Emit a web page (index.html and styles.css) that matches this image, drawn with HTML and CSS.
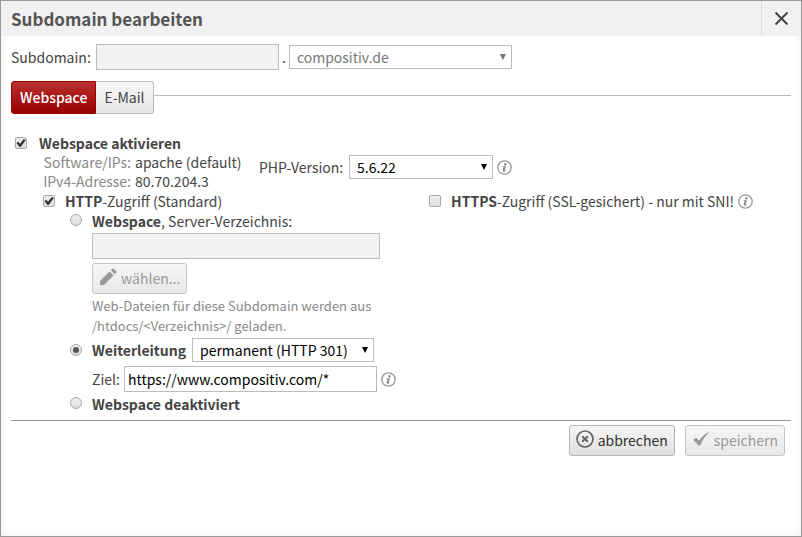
FILE: index.html
```html
<!DOCTYPE html>
<html lang="de">
<head>
<meta charset="utf-8">
<title>Subdomain bearbeiten</title>
<link rel="stylesheet" href="styles.css">
</head>
<body>
<svg class="sprite" aria-hidden="true">
  <symbol id="info" viewBox="0 0 15 15">
    <circle cx="7.5" cy="7.5" r="6.7" fill="none" stroke="#999" stroke-width="1.3"/>
    <circle cx="8.3" cy="4.2" r="1.2" fill="#888"/>
    <path d="M5.500 6.200h3.400l-1.100 4.300q-.1.500 1.100-.1v.6q-1.300.9-2.500.7-1-.2-.7-1.200l.9-3.600H5.400z" fill="#888"/>
  </symbol>
</svg>
<main class="dialog">
  <header class="titlebar">
    <h1 class="title">Subdomain bearbeiten</h1>
    <button class="close" type="button" aria-label="Schließen">
      <svg width="15" height="15" viewBox="0 0 15 15"><path d="M1.5 1.5l12 12m0-12l-12 12" stroke="#443f40" stroke-width="1.9" fill="none"/></svg>
    </button>
  </header>
  <form class="content">
    <div class="domain">
      <label class="domain-label" for="subdomain">Subdomain:</label>
      <input class="field field-name" id="subdomain" type="text" disabled>
      <span>.</span>
      <span class="select select-domain"><select aria-label="Domain" disabled><option>compositiv.de</option></select></span>
    </div>

    <nav class="tabs">
      <button class="tab tab-active" type="button">Webspace</button>
      <button class="tab" type="button">E-Mail</button>
    </nav>

    <section class="webspace">
      <div class="option">
        <input class="tick" id="active" type="checkbox" checked>
        <label for="active"><b>Webspace aktivieren</b></label>
      </div>
      <div class="server">
        <dl class="facts">
          <dt>Software/IPs:</dt><dd>apache (default)</dd>
          <dt>IPv4-Adresse:</dt><dd>80.70.204.3</dd>
        </dl>
        <div class="line php">
          <label class="php-label" for="php">PHP-Version:</label>
          <span class="select select-php"><select id="php"><option>5.6.22</option></select></span>
          <svg class="info"><use href="#info"/></svg>
        </div>
      </div>

      <div class="access">
        <div>
          <div class="option">
            <input class="tick" id="http" type="checkbox" checked>
            <label for="http"><b>HTTP</b>-Zugriff (Standard)</label>
          </div>
          <div class="modes">
            <div class="option">
              <input class="tick tick-round" id="folder" name="mode" type="radio">
              <label for="folder"><b>Webspace</b>, Server-Verzeichnis:</label>
            </div>
            <div class="details">
              <input class="field field-folder" type="text" aria-label="Server-Verzeichnis" disabled>
              <button class="button choose" type="button" disabled>
                <svg width="18" height="18" viewBox="0 0 18 18"><path d="M1 17v-4L10.600 3.400l4 4L5 17zM11.700 2.300l1.500-1.500q.8-.7 1.600 0l2.400 2.400q.8.800 0 1.600l-1.500 1.500z" fill="#999"/></svg>
                <span>wählen...</span>
              </button>
              <p class="hint">Web-Dateien für diese Subdomain werden aus /htdocs/&lt;Verzeichnis&gt;/ geladen.</p>
            </div>
            <div class="option option-select">
              <input class="tick tick-round" id="redirect" name="mode" type="radio" checked>
              <div class="line">
                <label class="redirect-label" for="redirect"><b>Weiterleitung</b></label>
                <span class="select select-redirect"><select aria-label="Art der Weiterleitung"><option>permanent (HTTP 301)</option></select></span>
              </div>
            </div>
            <div class="details target line">
              <label for="target">Ziel:</label>
              <input class="field field-target" id="target" type="text" value="https://www.compositiv.com/*">
              <svg class="info"><use href="#info"/></svg>
            </div>
            <div class="option">
              <input class="tick tick-round" id="off" name="mode" type="radio">
              <label for="off"><b>Webspace deaktiviert</b></label>
            </div>
          </div>
        </div>
        <div class="option">
          <input class="tick" id="https" type="checkbox">
          <div class="line">
            <label for="https"><b>HTTPS</b>-Zugriff (SSL-gesichert) - nur mit SNI!</label>
            <svg class="info"><use href="#info"/></svg>
          </div>
        </div>
      </div>
    </section>

    <footer class="actions">
      <button class="button" type="button">
        <svg width="18" height="18" viewBox="0 0 18 18"><circle cx="9" cy="9" r="8" fill="none" stroke="#666" stroke-width="1.700"/><path d="M6.200 6.200l5.600 5.600m0-5.600l-5.600 5.600" stroke="#666" stroke-width="2"/></svg>
        <span>abbrechen</span>
      </button>
      <button class="button" type="submit" disabled>
        <svg width="18" height="18" viewBox="0 0 18 18"><path d="M1 10l3-2.200 3.200 2.800Q11 4.500 17.500 1.500 11.500 7.500 8 15.500H6.500Q4 12 1 10z" fill="#999"/></svg>
        <span>speichern</span>
      </button>
    </footer>
  </form>
</main>
</body>
</html>
```
FILE: styles.css
```css
* {
  box-sizing: border-box;
}

body {
  margin: 0;
  background: #fff;
  color: #444;
  font-family: "Noto Sans CJK SC", "Open Sans", sans-serif;
  font-size: 14px;
  line-height: 20px;
}

button,
input,
select {
  font: inherit;
  color: inherit;
}

.sprite {
  display: none;
}

.dialog {
  min-height: 100vh;
  border: 1px solid #999;
  box-shadow: inset 0 0 8px #eee;
}

.titlebar {
  display: flex;
  align-items: stretch;
  justify-content: space-between;
  height: 35px;
  background: #f1f1f1;
}

.title {
  margin: 0;
  padding-left: 10px;
  font-size: 17px;
  line-height: 35px;
  color: #555;
}

.close {
  display: flex;
  align-items: center;
  justify-content: center;
  width: 40px;
  padding: 0;
  border: 0;
  border-left: 1px solid #ddd;
  background: none;
}

.content {
  padding: 8px 10px;
}

.domain,
.line {
  display: flex;
  align-items: center;
  gap: 4px;
}

.domain {
  gap: 3px;
}

.domain-label {
  min-width: 82px;
}

.field {
  height: 26px;
  padding: 0 3px;
  border: 1px solid #bbb;
  border-radius: 0;
  background: #fff;
  color: #000;
}

.field:disabled {
  background: #f2f2f2;
}

.field-name {
  width: 183px;
}

.field-folder {
  display: block;
  width: 288px;
}

.field-target {
  width: 253px;
}

.select {
  position: relative;
  display: flex;
}

.select::after {
  content: "";
  position: absolute;
  top: 9px;
  right: 6px;
  width: 6px;
  height: 6px;
  background: #000;
  clip-path: polygon(0 0, 100% 0, 50% 100%);
  pointer-events: none;
}

.select select {
  appearance: none;
  width: 100%;
  height: 24px;
  padding: 0 7px;
  border: 1px solid #bbb;
  border-radius: 0;
  background: #fff;
  color: #000;
}

.select select:disabled {
  color: #777;
  opacity: 1;
}

.select-domain {
  width: 223px;
}

.select-domain::after {
  background: #777;
}

.select-php {
  width: 144px;
}

.select-redirect {
  width: 182px;
}

.tabs {
  display: flex;
  margin-top: 11px;
}

.tabs::after {
  content: "";
  flex: 1;
  height: 14px;
  border-bottom: 1px solid #bbb;
}

.tab {
  height: 33px;
  padding: 0 8px 1px;
  border: 1px solid #bbb;
  border-left: 0;
  border-radius: 0 3px 3px 0;
  background: linear-gradient(#f6f6f6, #e6e6e6);
}

.tab-active {
  border: 1px solid #900;
  border-radius: 3px 0 0 3px;
  background: linear-gradient(#b83030, #900);
  color: #fff;
  font-weight: 500;
}

.webspace {
  padding: 19px 0 6px 4px;
}

.option {
  display: grid;
  grid-template-columns: 24px 1fr;
  align-items: start;
}

.tick {
  appearance: none;
  display: grid;
  place-items: center;
  width: 12px;
  height: 12px;
  margin: 4px 0 0;
  border: 1px solid #aaa;
  border-radius: 2px;
  background: linear-gradient(#eee, #dcdcdc);
}

.tick:checked::before {
  content: "";
  width: 10px;
  height: 9px;
  background: #333;
  clip-path: polygon(5% 50%, 22% 36%, 40% 58%, 78% 5%, 98% 18%, 47% 95%, 35% 95%);
}

.tick-round {
  margin-top: 3px;
  border-radius: 50%;
}

.tick-round:checked::before {
  width: 6px;
  height: 6px;
  border-radius: 50%;
  background: #555;
  clip-path: none;
}

.server {
  display: flex;
  align-items: flex-start;
  gap: 16px;
  padding-left: 24px;
}

.facts {
  display: grid;
  grid-template-columns: 92px 108px;
  column-gap: 4px;
  margin: 0;
  line-height: 19px;
}

.facts dt {
  color: #888;
  text-align: right;
}

.facts dd {
  margin: 0;
}

.php {
  margin-top: 2px;
}

.php-label {
  min-width: 86px;
}

.redirect-label {
  min-width: 96px;
}

.info {
  width: 15px;
  height: 15px;
}

.access {
  display: grid;
  grid-template-columns: 16fr 15fr;
  padding-left: 28px;
}

.access .option {
  grid-template-columns: 22px 1fr;
}

.modes {
  padding-left: 27px;
}

.details {
  padding: 2px 0 0 22px;
}

.button {
  display: flex;
  align-items: center;
  gap: 4px;
  height: 31px;
  padding: 0 6px;
  border: 1px solid #b5b5b5;
  border-radius: 3px;
  background: linear-gradient(#f6f6f6, #e0e0e0);
  color: #333;
}

.button svg {
  margin-bottom: 3px;
}

.button span {
  padding-bottom: 1px;
}

.button:disabled {
  border-color: #c5c5c5;
  background: linear-gradient(#f6f6f6, #e8e8e8);
  color: #999;
}

.choose {
  margin-top: 4px;
}

.hint {
  width: 290px;
  margin: 2px 0;
  font-size: 13px;
  color: #888;
}

.access .option-select {
  align-items: center;
}

.option-select .tick {
  margin: 0;
}

.target {
  margin: 2px 0;
}

.actions {
  display: flex;
  justify-content: flex-end;
  gap: 10px;
  padding: 4px 6px 0;
  border-top: 1px solid #999;
}
```
